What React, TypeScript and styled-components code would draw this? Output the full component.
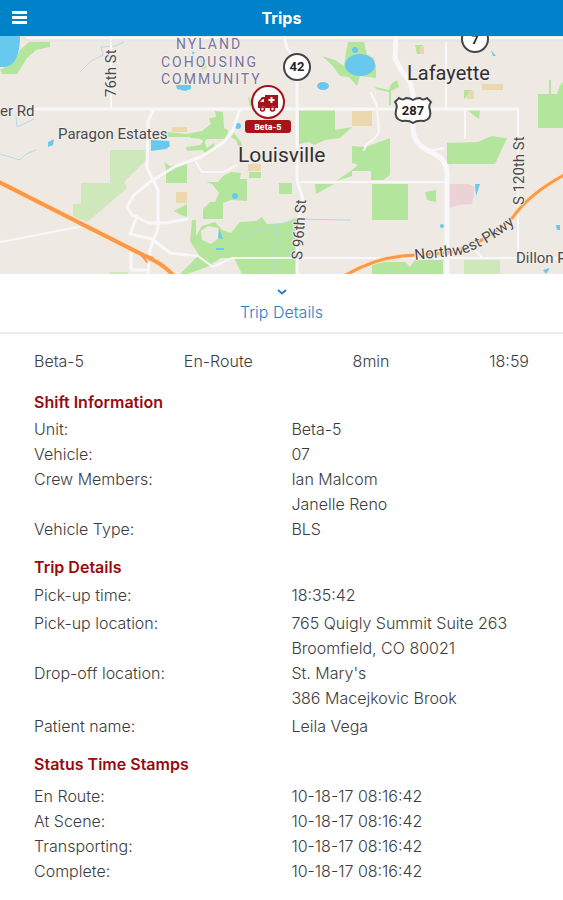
import React from "react";
import styled, { createGlobalStyle } from "styled-components";

const GlobalStyle = createGlobalStyle`
  * {
    box-sizing: border-box;
  }

  body {
    margin: 0;
    background: #ffffff;
    color: #3c3c3e;
    font-family: Inter, "Liberation Sans", sans-serif;
    font-size: 16px;
    font-weight: 300;
    line-height: 25px;
  }
`;

const Page = styled.div`
  display: flex;
  flex-direction: column;
  min-height: 100vh;
`;

const TopBar = styled.header`
  display: grid;
  grid-template-columns: 1fr auto 1fr;
  align-items: center;
  height: 36px;
  padding: 0 10px;
  background: #0082ca;
  color: #ffffff;
`;

const MenuButton = styled.button`
  display: flex;
  justify-self: start;
  padding: 0;
  border: 0;
  background: none;
  color: inherit;
  cursor: pointer;
`;

const PageTitle = styled.h1`
  margin: 0;
  font-size: 16px;
  font-weight: 700;
`;

const MapDrawing = styled.svg`
  display: block;
  width: 100%;
  height: 238px;
  background: #eee9e2;
`;

const MapLabel = styled.text<{ $size?: number; $tone?: string }>`
  font-family: Roboto, "Liberation Sans", sans-serif;
  font-size: ${(p) => p.$size ?? 15}px;
  font-weight: 400;
  fill: ${(p) => p.$tone ?? "#4a4a4c"};
  stroke: #f3efea;
  stroke-width: 2px;
  stroke-linejoin: round;
  paint-order: stroke;
`;

const AreaLabel = styled(MapLabel)`
  letter-spacing: 2px;
`;

const ShieldText = styled.text`
  font-family: Roboto, "Liberation Sans", sans-serif;
  font-size: 13px;
  font-weight: 700;
  text-anchor: middle;
  fill: #222222;
`;

const MarkerText = styled.text`
  font-family: Inter, "Liberation Sans", sans-serif;
  font-size: 8px;
  font-weight: 800;
  text-anchor: middle;
  fill: #ffffff;
`;

const SheetToggle = styled.button`
  display: flex;
  flex-direction: column;
  align-items: center;
  gap: 4px;
  width: 100%;
  padding: 14px 0 7px;
  border: 0;
  border-bottom: 2px solid #ececec;
  background: #ffffff;
  color: #2a7dc9;
  font: inherit;
  cursor: pointer;
`;

const Sheet = styled.main`
  padding: 15px 34px;
`;

const Summary = styled.div`
  display: flex;
  justify-content: space-between;
  margin-bottom: 14px;
`;

const Section = styled.section`
  margin-bottom: 11px;
`;

const SectionTitle = styled.h2<{ $gap: number }>`
  margin: 0 0 ${(p) => p.$gap}px;
  color: #980b10;
  font-size: 16px;
  font-weight: 600;
  line-height: 28px;
`;

const Details = styled.dl`
  margin: 0;
`;

const DetailRow = styled.div<{ $spaced?: boolean }>`
  display: grid;
  grid-template-columns: 52% 48%;
  margin-top: ${(p) => (p.$spaced ? 3 : 0)}px;
`;

const Term = styled.dt`
  margin: 0;
`;

const Values = styled.dd`
  display: flex;
  flex-direction: column;
  margin: 0;
`;

interface Detail {
  label: string;
  values: string[];
  spaced?: boolean;
}

interface DetailGroup {
  title: string;
  gap: number;
  rows: Detail[];
}

const summary = ["Beta-5", "En-Route", "8min", "18:59"];

const stamp = "10-18-17 08:16:42";

const groups: DetailGroup[] = [
  {
    title: "Shift Information",
    gap: 1,
    rows: [
      { label: "Unit:", values: ["Beta-5"] },
      { label: "Vehicle:", values: ["07"] },
      { label: "Crew Members:", values: ["Ian Malcom", "Janelle Reno"] },
      { label: "Vehicle Type:", values: ["BLS"] },
    ],
  },
  {
    title: "Trip Details",
    gap: 2,
    rows: [
      { label: "Pick-up time:", values: ["18:35:42"] },
      {
        label: "Pick-up location:",
        values: ["765 Quigly Summit Suite 263", "Broomfield, CO 80021"],
        spaced: true,
      },
      { label: "Drop-off location:", values: ["St. Mary's", "386 Macejkovic Brook"] },
      { label: "Patient name:", values: ["Leila Vega"], spaced: true },
    ],
  },
  {
    title: "Status Time Stamps",
    gap: 6,
    rows: [
      { label: "En Route:", values: [stamp] },
      { label: "At Scene:", values: [stamp] },
      { label: "Transporting:", values: [stamp] },
      { label: "Complete:", values: [stamp] },
    ],
  },
];

function Parks() {
  return (
    <g fill="#b4e59c">
      <path d="M29 42H50V47L36 50 27 58 17 74H2L0 70 14 62 20 50Z" />
      <g fill="#cfe8bb">
        <path d="M110 150H146V160L124 182 127 188 98 213 87 222 73 216V204H81V183H110Z" />
        <path d="M110 272H128V274H110ZM464 260H500V274H464Z" />
      </g>
      <path d="M166 132L186 134 202 131 211 124 209 118 216 117 215 111 223 112 224 128 228 130 227 139 207 139 204 142 198 137H166Z" />
      <path d="M186 147L200 145 204 140 207 148 214 143 215 149 205 153 202 150 187 151Z" />
      <path d="M164 162L170 166 187 163V183H166V168Z" />
      <path d="M174 211L187 204V217L181 215ZM180 167H187V182H180Z" />
      <path d="M190 135L205 130V139L190 138ZM234 133L241 142 243 149 239 148 236 140 231 137ZM248 96L254 104 250 106Z" />
      <path d="M206 182H218L223 176 231 172 241 173 240 179H247V201L231 200 223 203V219H203V209L210 202H215L219 193 212 184Z" />
      <path d="M249 172H261V178H249Z" />
      <path d="M279 183H292V194L279 194Z" />
      <path
        fillRule="evenodd"
        d="M192 220H196V236L202 226 215 222 222 230 231 233 240 222 256 221 262 217 267 224 286 223 297 218V274H242L234 258H221L207 267 187 274H180L199 255 190 241ZM201 231L208 226 218 228 220 237 211 244 202 240Z"
      />
      <path d="M299 110H335V130L352 127 340 138 325 140 314 145 309 142 299 144Z" />
      <path d="M352 146L366 147 390 138V175L383 180H371V171H352V176L336 181 352 170 358 165 352 163Z" />
      <path d="M315 184H334L316 194ZM372 184H408V220H372Z" />
      <path d="M425 192L436 190V202L427 200ZM447 143L478 142 490 137 507 138 495 164H447Z" />
      <path d="M538 94H549V80H551V94H557L560 85 563 82V128H538Z" />
      <path d="M322 56L335 60 344 66 346 52 348 42H364L367 55 374 58 376 78 360 76 357 86 349 77 340 76 332 65Z" />
      <path d="M370 58L376 65V76H370ZM415 45H423V54H417ZM464 90H473L464 99ZM467 110H480L479 119Z" />
      <path d="M375 87L389 90 391 84 397 80 399 87 391 91V105H389V92L376 89ZM484 139L493 136 505 139Z" />
      <path d="M372 262H405L410 267 415 260H443V274H372Z" />
      <path d="M200 57L207 68 202 70Z" opacity="0.7" />
    </g>
  );
}

function Fields() {
  return (
    <g fill="#ebd8ae">
      <path d="M172 127H187V132H172ZM176 192H187V203H176ZM352 111H372V126H352ZM248 164H261V171H248ZM420 46H424V54H420ZM469 91H474V99H466ZM482 84H503V90H482Z" />
      <path d="M449 184H468L475 187 472 204 459 205 449 208Z" fill="#ead2d6" />
    </g>
  );
}

function Water() {
  return (
    <g>
      <g fill="#68c8ed">
        <path d="M0 36H20Q20 66 4 67L0 67Z" />
        <ellipse cx="360" cy="65" rx="15" ry="11" />
        <circle cx="355" cy="50" r="3" />
        <ellipse cx="323" cy="86" rx="6" ry="4" />
        <path d="M151 140L169 141 170 146 166 149 151 151ZM176 85H191V89L185 91 177 89ZM48 142L54 139 53 145 48 147Z" />
        <circle cx="238" cy="126" r="3" />
        <circle cx="235" cy="196" r="3" />
        <path d="M219 229L223 239 218 238ZM216 248H224V250H216ZM475 184H480L476 196ZM491 50L496 56H493ZM556 225H560V230H557ZM543 270L550 268 546 274ZM192 52H195L193 55Z" />
        <circle cx="442" cy="226" r="2" />
      </g>
      <g fill="none" stroke="#b7d8e7" strokeWidth="1">
        <path d="M80 72L91 61 103 55 101 47 115 46 124 42M16 116L17 127 34 119M0 154L20 160 26 154 36 150M242 239L254 231 287 222 294 219 351 220M276 229L278 243 271 250 276 274" />
      </g>
    </g>
  );
}

function Roads() {
  return (
    <g fill="none" stroke="#f8f8fa" strokeLinejoin="round" strokeLinecap="round">
      <path
        d="M27 38H563M111 36V108M446 42V108M465 110V138M518 108V258H479M301 182H446M0 242L84 226M180 254L198 256 213 267 232 258H563"
        strokeWidth="2"
      />
      <path d="M22 36L28 41H563" stroke="#e3e0e2" strokeWidth="1" />
      <path
        d="M36 109H518M154 109L148 121 147 168 158 190V228L150 250 148 274M240 109L233 130 224 142 201 157 176 166 150 182 134 195 127 207 132 215 149 223H166L187 219M137 216L130 234 152 239 170 253 188 255M131 251V270H146"
        strokeWidth="3"
      />
      <path
        d="M196 162L202 172H224L237 165M371 93L377 106 379 132 375 138 366 145 364 150M429 151L444 148"
        strokeWidth="2"
      />
      <path d="M284 36L287 48 297 62V180L303 200 297 226V274" strokeWidth="3" />
      <path
        d="M396 36L395 58 401 70 410 82 413 94V130Q414 145 433 153 446 159 447 172V274"
        strokeWidth="5"
      />
      <path d="M475 250L482 258" strokeWidth="2" />
    </g>
  );
}

function Highways() {
  return (
    <g fill="none" strokeLinecap="round">
      <path d="M-3 181L151 259Q164 265 174 276" stroke="#fde3bf" strokeWidth="6" />
      <path d="M-3 181L151 259Q164 265 174 276" stroke="#fb984a" strokeWidth="4" />
      <path d="M139 252L147 262M141 254L153 258" stroke="#fb984a" strokeWidth="2" />
      <path
        d="M344 276Q373 259 402 256L445 253Q483 246 513 217 530 193 566 174"
        stroke="#fde3bf"
        strokeWidth="5"
      />
      <path
        d="M344 276Q373 259 402 256L445 253Q483 246 513 217 530 193 566 174"
        stroke="#fb984a"
        strokeWidth="3"
      />
    </g>
  );
}

function Labels() {
  return (
    <g>
      <AreaLabel x="176" y="49" $size={14} $tone="#77739c">NYLAND</AreaLabel>
      <AreaLabel x="161" y="67" $size={14} $tone="#77739c">COHOUSING</AreaLabel>
      <AreaLabel x="161" y="84" $size={14} $tone="#77739c">COMMUNITY</AreaLabel>
      <MapLabel x="0" y="116">er Rd</MapLabel>
      <MapLabel x="58" y="139">Paragon Estates</MapLabel>
      <MapLabel x="407" y="80" $size={20} $tone="#303033">Lafayette</MapLabel>
      <MapLabel x="238" y="162" $size={21} $tone="#303033">Louisville</MapLabel>
      <MapLabel transform="translate(116 97) rotate(-90)">76th St</MapLabel>
      <MapLabel transform="translate(302 260) rotate(-86)">S 96th St</MapLabel>
      <MapLabel transform="translate(524 205) rotate(-90)">S 120th St</MapLabel>
      <MapLabel x="516" y="263">Dillon Rd</MapLabel>
      <path id="parkway" d="M415 260L460 255Q490 246 530 211" fill="none" />
      <MapLabel>
        <textPath href="#parkway">Northwest Pkwy</textPath>
      </MapLabel>
    </g>
  );
}

function Shields() {
  return (
    <g fill="#ffffff" stroke="#444446" strokeWidth="2">
      <circle cx="297" cy="67" r="13" />
      <circle cx="475" cy="39" r="13" />
      <path d="M399 98Q403 101 406 98 410 98 413 100 416 98 420 98 423 101 427 98L431 102Q428 106 430 110 432 119 424 121 417 120 413 123 409 120 402 121 394 119 396 110 398 106 395 102Z" />
      <g stroke="none">
        <ShieldText x="297" y="71">42</ShieldText>
        <ShieldText x="475" y="44">7</ShieldText>
        <ShieldText x="413" y="115">287</ShieldText>
      </g>
    </g>
  );
}

function UnitMarker() {
  return (
    <g>
      <circle cx="268" cy="102" r="16" fill="#ffffff" stroke="#a61318" strokeWidth="2" />
      <path
        d="M265 95H278V108H275.500A3 3 0 0 0 270 108H265.500A3 3 0 0 0 260 108H258V102L262 97H265Z"
        fill="#a61318"
      />
      <path d="M260 102L263 99H264V102Z" fill="#ffffff" />
      <path d="M271.500 97V103M268.500 100H274.500" stroke="#ffffff" strokeWidth="2" />
      <circle cx="262.500" cy="109" r="2" fill="#ffffff" stroke="#a61318" strokeWidth="1.500" />
      <circle cx="272.500" cy="109" r="2" fill="#ffffff" stroke="#a61318" strokeWidth="1.500" />
      <rect x="245" y="120" width="46" height="13" rx="3" fill="#a61318" />
      <MarkerText x="268" y="130">Beta-5</MarkerText>
    </g>
  );
}

function TripMap() {
  return (
    <MapDrawing
      viewBox="0 36 563 238"
      preserveAspectRatio="xMidYMid slice"
      role="img"
      aria-label="Map of Louisville with unit Beta-5"
    >
      <Parks />
      <Fields />
      <Water />
      <Roads />
      <Highways />
      <Labels />
      <Shields />
      <UnitMarker />
    </MapDrawing>
  );
}

export default function App() {
  return (
    <Page>
      <GlobalStyle />
      <TopBar>
        <MenuButton type="button" aria-label="Menu">
          <svg width="18" height="16" viewBox="0 0 18 16" fill="currentColor">
            <path d="M2 1H17V4H2ZM2 6H17V9H2ZM2 11H17V14H2Z" />
          </svg>
        </MenuButton>
        <PageTitle>Trips</PageTitle>
      </TopBar>
      <TripMap />
      <SheetToggle type="button" aria-expanded="true">
        <svg width="12" height="8" viewBox="0 0 12 8" fill="none" stroke="currentColor" strokeWidth="2">
          <path d="M2 2L6 5.500 10 2" />
        </svg>
        Trip Details
      </SheetToggle>
      <Sheet>
        <Summary>
          {summary.map((item) => (
            <span key={item}>{item}</span>
          ))}
        </Summary>
        {groups.map((group) => (
          <Section key={group.title}>
            <SectionTitle $gap={group.gap}>{group.title}</SectionTitle>
            <Details>
              {group.rows.map((row) => (
                <DetailRow key={row.label} $spaced={row.spaced}>
                  <Term>{row.label}</Term>
                  <Values>
                    {row.values.map((value) => (
                      <span key={value}>{value}</span>
                    ))}
                  </Values>
                </DetailRow>
              ))}
            </Details>
          </Section>
        ))}
      </Sheet>
    </Page>
  );
}
